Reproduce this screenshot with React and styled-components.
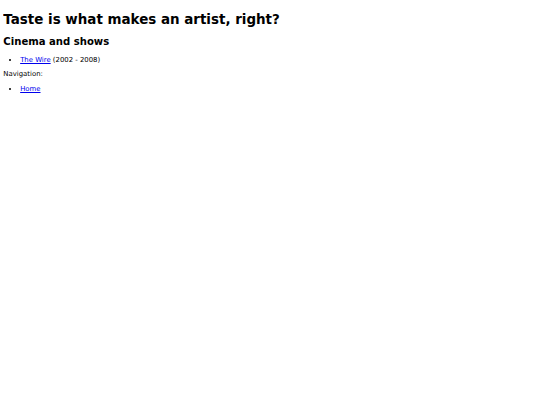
import React from "react";
import styled, { createGlobalStyle } from "styled-components";

const Global = createGlobalStyle`
  html, body { background: #fff; }
  body {
    margin: 3.36px;
    font-family: "DejaVu Sans", sans-serif;
    font-size: 6.9px;
    color: #000;
  }
`;

const Title = styled.h1`
  font-size: 13.44px;
  font-weight: bold;
  margin: 9px 0;
`;

const Subtitle = styled.h2`
  font-size: 10.08px;
  font-weight: bold;
  margin: 8.4px 0;
`;

const List = styled.ul`
  margin: 6.72px 0;
  padding-left: 16.8px;
  list-style: disc;
`;

const Item = styled.li``;

const Link = styled.a`
  color: #0000ee;
  text-decoration: underline;
`;

const Para = styled.p`
  margin: 6.72px 0;
`;

export default function App() {
  return (
    <>
      <Global />
      <Title>Taste is what makes an artist, right?</Title>
      <Subtitle>Cinema and shows</Subtitle>
      <List>
        <Item>
          <Link href="#">The Wire</Link> (2002 - 2008)
        </Item>
      </List>
      <Para>Navigation:</Para>
      <List>
        <Item>
          <Link href="#">Home</Link>
        </Item>
      </List>
    </>
  );
}
